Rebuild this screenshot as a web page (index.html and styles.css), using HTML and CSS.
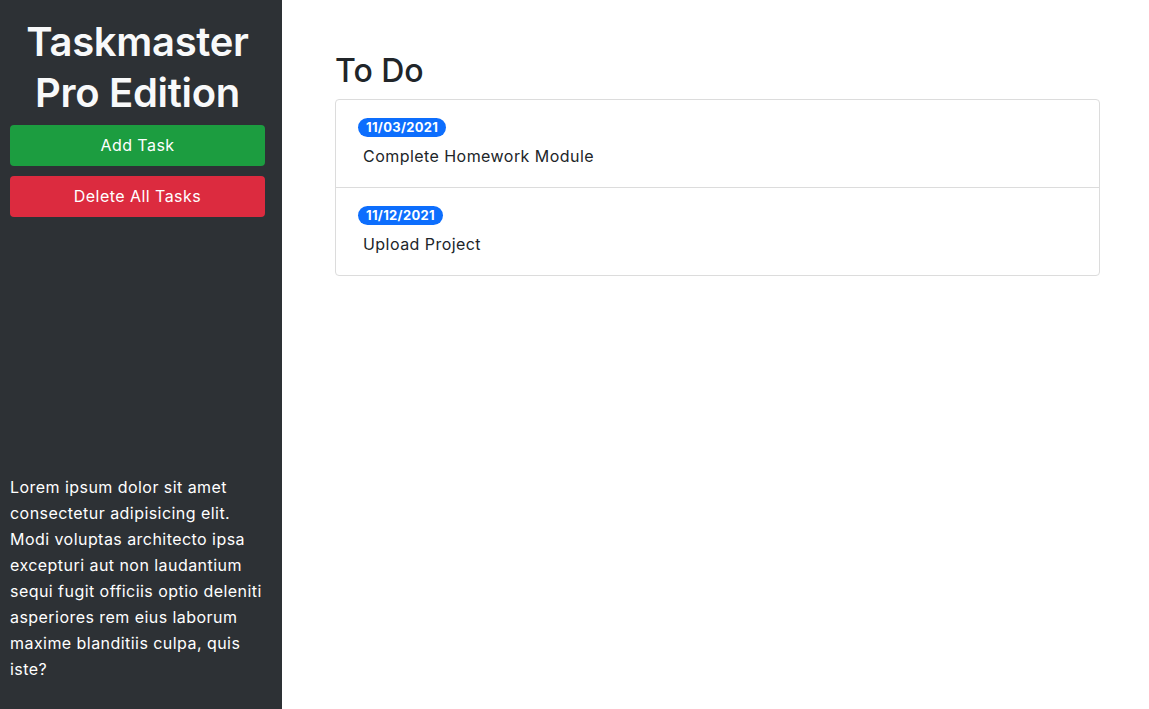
FILE: index.html
```html
<!DOCTYPE html>
<html lang="en">
<head>
<meta charset="utf-8">
<title>Taskmaster Pro</title>
<link rel="stylesheet" href="styles.css">
</head>
<body>
<div class="layout">
  <aside class="sidebar">
    <div class="top">
      <h1 class="brand">Taskmaster Pro Edition</h1>
      <button class="btn btn-success">Add Task</button>
      <button class="btn btn-danger">Delete All Tasks</button>
    </div>
    <p class="blurb">Lorem ipsum dolor sit amet consectetur adipisicing elit. Modi voluptas architecto ipsa excepturi aut non laudantium sequi fugit officiis optio deleniti asperiores rem eius laborum maxime blanditiis culpa, quis iste?</p>
  </aside>
  <main class="main">
    <h2 class="heading">To Do</h2>
    <ul class="list">
      <li class="item">
        <span class="badge">11/03/2021</span>
        <p class="task">Complete Homework Module</p>
      </li>
      <li class="item">
        <span class="badge">11/12/2021</span>
        <p class="task">Upload Project</p>
      </li>
    </ul>
  </main>
</div>
</body>
</html>
```
FILE: styles.css
```css
* { box-sizing: border-box; }
html, body { margin: 0; padding: 0; height: 100%; }
body {
  font-family: Inter, "Noto Sans", "Liberation Sans", sans-serif;
  font-size: 16px;
  line-height: 1.5;
  letter-spacing: 0.45px;
  color: #212529;
  background: #fff;
}
.layout {
  display: flex;
  height: 709px;
}
.sidebar {
  width: 282px;
  flex: 0 0 282px;
  background: #2d3135;
  color: #fff;
  display: flex;
  flex-direction: column;
  justify-content: space-between;
  padding: 16px 10px 27px 10px;
}
.top {
  display: flex;
  flex-direction: column;
  gap: 10px;
  padding-right: 7px;
}
.brand {
  margin: 0 0 -3px 0;
  font-size: 40px;
  font-weight: 600;
  letter-spacing: -0.3px;
  line-height: 51px;
  text-align: center;
  color: #f8f9fa;
}
.btn {
  font-family: inherit;
  font-size: 16px;
  letter-spacing: 0.45px;
  line-height: 23px;
  padding: 8px 12px;
  border: 1px solid transparent;
  border-radius: 4px;
  color: #fff;
  width: 100%;
  cursor: pointer;
}
.btn-success { background: #1c9d40; }
.btn-danger { background: #dc2b3f; }
.blurb {
  margin: 0;
  line-height: 26px;
  color: #fff;
}
.main {
  flex: 1;
  padding: 51px 49px 0 53px;
}
.heading {
  margin: 0 0 9px 0;
  font-size: 32px;
  font-weight: 500;
  letter-spacing: 0;
  line-height: 39px;
}
.list {
  list-style: none;
  margin: 0;
  padding: 0;
  border: 1px solid #dcdcdc;
  border-radius: 4px;
  width: 765px;
}
.item {
  height: 87px;
  padding: 18px 22px 0 22px;
  display: flex;
  flex-direction: column;
  align-items: flex-start;
}
.item + .item {
  height: 88px;
  border-top: 1px solid #dcdcdc;
}
.badge {
  display: block;
  background: #0d6efd;
  color: #fff;
  font-size: 13px;
  font-weight: 700;
  letter-spacing: 0.3px;
  line-height: 13px;
  padding: 3px 8px;
  border-radius: 10px;
}
.task {
  margin: 7px 0 0 5px;
  line-height: 24px;
}
```
